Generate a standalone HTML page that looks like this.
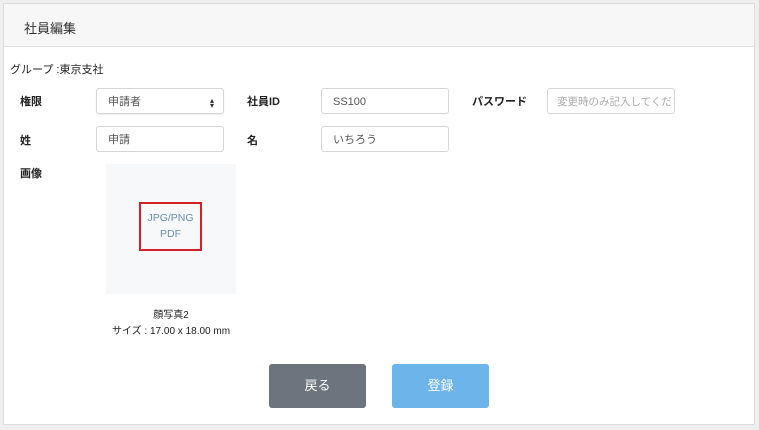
<!DOCTYPE html>
<html><head><meta charset="utf-8"><style>
body{margin:0;width:759px;height:430px;background:#efefef;font-family:"Liberation Sans","Noto Sans CJK JP",sans-serif;color:#222;font-size:11px;position:relative;overflow:hidden}
.card{position:absolute;left:3px;top:3px;width:752px;height:422px;background:#fff;border:1px solid #ddd;box-sizing:border-box}
.hd{position:absolute;left:0;top:0;right:0;height:42px;background:#f7f7f7;border-bottom:1px solid #ddd}
.a{position:absolute}
.lbl{position:absolute;font-weight:bold;font-size:11px}
.in{position:absolute;height:26px;width:128px;border:1px solid #d6d6d6;border-radius:3px;box-sizing:border-box;padding:1px 11px 0;line-height:24px;font-size:11px;color:#555}
.btn{position:absolute;top:364px;width:97px;height:44px;border-radius:3px;color:#fff;font-size:13px;text-align:center;line-height:44px}
</style></head><body>
<div class="card"><div class="hd"><span class="a" style="left:20px;top:14px;font-size:13px;color:#333">社員編集</span></div></div>
<span class="a" style="left:10px;top:61px;font-size:11px">グループ :東京支社</span>
<span class="lbl" style="left:20px;top:93px">権限</span>
<div class="in" style="left:96px;top:88px;box-shadow:0 1px 1px rgba(0,0,0,.08)">申請者<span style="position:absolute;right:9px;top:0;font-size:8px;color:#333">&#x25B4;<br></span><span style="position:absolute;right:9px;top:5px;font-size:8px;color:#333">&#x25BE;</span></div>
<span class="lbl" style="left:247px;top:93px">社員ID</span>
<div class="in" style="left:321px;top:88px">SS100</div>
<span class="lbl" style="left:472px;top:93px">パスワード</span>
<div class="in" style="left:547px;top:88px;color:#aaa;font-size:10.5px;overflow:hidden;white-space:nowrap;padding-left:9px">変更時のみ記入してください</div>
<span class="lbl" style="left:20px;top:132px">姓</span>
<div class="in" style="left:96px;top:126px">申請</div>
<span class="lbl" style="left:247px;top:132px">名</span>
<div class="in" style="left:321px;top:126px">いちろう</div>
<span class="lbl" style="left:20px;top:165px">画像</span>
<div class="a" style="left:106px;top:164px;width:130px;height:130px;background:#f6f8fa"></div>
<div class="a" style="left:139px;top:202px;width:63px;height:49px;border:2px solid #d0202a;box-sizing:border-box;color:#6c8fb4;font-size:10.5px;text-align:center;line-height:16px;padding-top:6px">JPG/PNG<br>PDF</div>
<div class="a" style="left:90px;top:308px;width:162px;text-align:center;font-size:10px;line-height:16px;color:#222">顔写真2<br>サイズ : 17.00 x 18.00 mm</div>
<div class="btn" style="left:269px;background:#6c757d">戻る</div>
<div class="btn" style="left:392px;background:#6db4ea">登録</div>
</body></html>
